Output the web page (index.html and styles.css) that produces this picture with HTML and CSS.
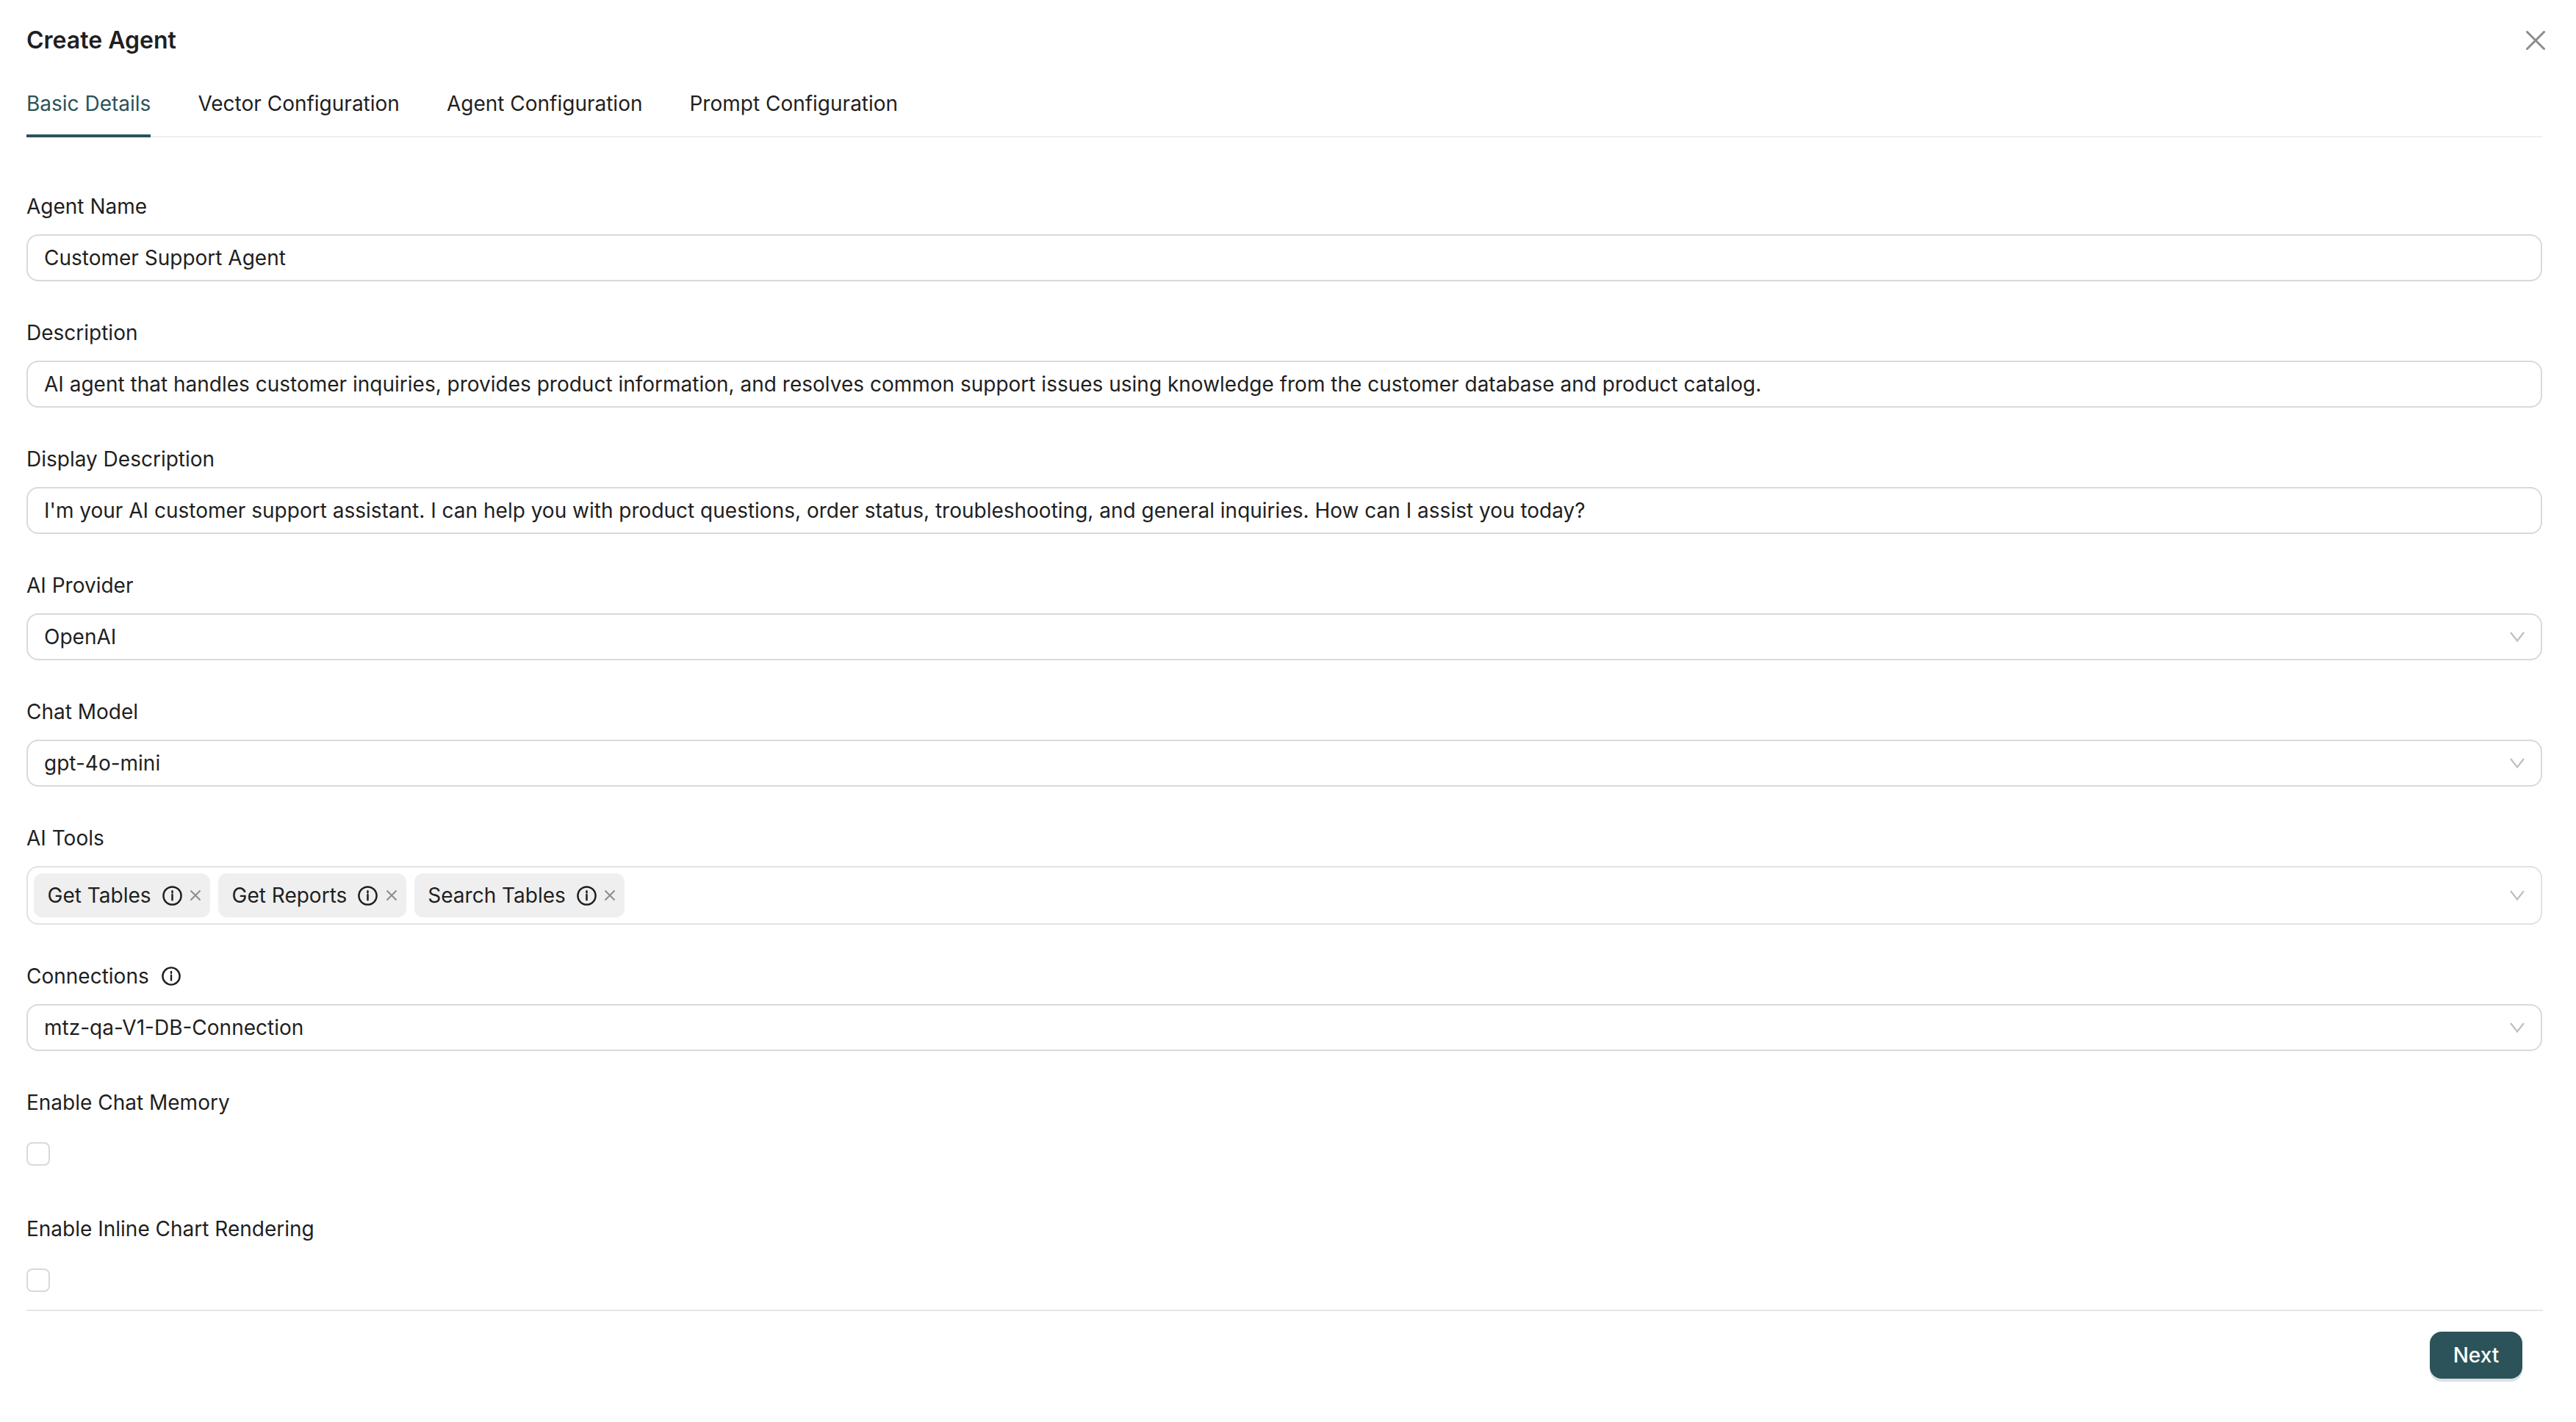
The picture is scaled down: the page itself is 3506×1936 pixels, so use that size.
FILE: index.html
```html
<!DOCTYPE html>
<html lang="en">
<head>
<meta charset="utf-8">
<title>Create Agent</title>
<link rel="stylesheet" href="styles.css">
</head>
<body>
<div class="modal">
  <header class="modal-head">
    <h1 class="title">Create Agent</h1>
    <svg class="close" viewBox="0 0 26 26"><path d="M1.5 1.5 24.5 24.5M24.5 1.5 1.5 24.5"/></svg>
  </header>
  <nav class="tabs">
    <span class="tab active">Basic Details</span>
    <span class="tab">Vector Configuration</span>
    <span class="tab">Agent Configuration</span>
    <span class="tab">Prompt Configuration</span>
  </nav>
  <form class="form">
    <div class="field">
      <div class="label">Agent Name</div>
      <div class="control">Customer Support Agent</div>
    </div>
    <div class="field">
      <div class="label">Description</div>
      <div class="control">AI agent that handles customer inquiries, provides product information, and resolves common support issues using knowledge from the customer database and product catalog.</div>
    </div>
    <div class="field">
      <div class="label">Display Description</div>
      <div class="control">I'm your AI customer support assistant. I can help you with product questions, order status, troubleshooting, and general inquiries. How can I assist you today?</div>
    </div>
    <div class="field">
      <div class="label">AI Provider</div>
      <div class="control select">OpenAI<svg class="chev" viewBox="0 0 20 14"><path d="M1 1 10 12.5 19 1"/></svg></div>
    </div>
    <div class="field">
      <div class="label">Chat Model</div>
      <div class="control select">gpt-4o-mini<svg class="chev" viewBox="0 0 20 14"><path d="M1 1 10 12.5 19 1"/></svg></div>
    </div>
    <div class="field">
      <div class="label">AI Tools</div>
      <div class="control select multi">
        <span class="tag">Get Tables<svg class="info" viewBox="0 0 28 28"><circle cx="14" cy="14" r="12.5"/><path d="M14 12.5V20M14 7.5V9.5"/></svg><svg class="tag-x" viewBox="0 0 16 16"><path d="M1.5 1.5 14.5 14.5M14.5 1.5 1.5 14.5"/></svg></span>
        <span class="tag">Get Reports<svg class="info" viewBox="0 0 28 28"><circle cx="14" cy="14" r="12.5"/><path d="M14 12.5V20M14 7.5V9.5"/></svg><svg class="tag-x" viewBox="0 0 16 16"><path d="M1.5 1.5 14.5 14.5M14.5 1.5 1.5 14.5"/></svg></span>
        <span class="tag">Search Tables<svg class="info" viewBox="0 0 28 28"><circle cx="14" cy="14" r="12.5"/><path d="M14 12.5V20M14 7.5V9.5"/></svg><svg class="tag-x" viewBox="0 0 16 16"><path d="M1.5 1.5 14.5 14.5M14.5 1.5 1.5 14.5"/></svg></span>
        <svg class="chev" viewBox="0 0 20 14"><path d="M1 1 10 12.5 19 1"/></svg>
      </div>
    </div>
    <div class="field">
      <div class="label">Connections<svg class="info label-info" viewBox="0 0 28 28"><circle cx="14" cy="14" r="12.5"/><path d="M14 12.5V20M14 7.5V9.5"/></svg></div>
      <div class="control select">mtz-qa-V1-DB-Connection<svg class="chev" viewBox="0 0 20 14"><path d="M1 1 10 12.5 19 1"/></svg></div>
    </div>
    <div class="field">
      <div class="label">Enable Chat Memory</div>
      <div class="check-row"><span class="checkbox"></span></div>
    </div>
    <div class="field">
      <div class="label">Enable Inline Chart Rendering</div>
      <div class="check-row"><span class="checkbox"></span></div>
    </div>
  </form>
  <footer class="foot">
    <button class="next" type="button">Next</button>
  </footer>
</div>
</body>
</html>
```
FILE: styles.css
```css
* { box-sizing: border-box; }
html, body { margin: 0; background: #fff; }
body {
  font-family: Inter, "Liberation Sans", sans-serif;
  font-size: 28px;
  color: #1f1f1f;
}
.modal { width: 3506px; height: 1936px; padding: 0 46px 0 36px; overflow: hidden; }
.modal-head { height: 108px; padding-top: 2px; display: flex; align-items: center; justify-content: space-between; margin-right: -4px; }
.title { margin: 0; font-size: 32px; line-height: 40px; font-weight: 600; }
.close { width: 26px; height: 26px; fill: none; stroke: #8c8c8c; stroke-width: 3; stroke-linecap: round; }
.tabs { display: flex; gap: 64px; height: 79px; border-bottom: 2px solid #efefef; }
.tab { height: 79px; line-height: 66px; }
.tab.active { color: #2b5359; border-bottom: 4px solid #2b5359; }
.form { display: flex; flex-direction: column; gap: 51px; padding-top: 75px; }
.field { display: flex; flex-direction: column; gap: 17px; }
.label { height: 40px; padding-bottom: 2px; display: flex; align-items: center; }
.control {
  height: 64px; border: 2px solid #d9d9d9; border-radius: 16px; padding: 0 22px;
  display: flex; align-items: center; line-height: 40px;
}
.select { justify-content: space-between; }
.chev { width: 20px; height: 14px; fill: none; stroke: #bfbfbf; stroke-width: 2.2; }
.multi { height: 80px; padding: 0 22px 0 8px; gap: 11px; justify-content: flex-start; border-color: #e2e2e2; }
.multi .chev { margin-left: auto; }
.tag {
  height: 60px; background: #efefef; border-radius: 12px; padding: 0 12px 0 18.5px;
  display: flex; align-items: center;
}
.info { width: 27px; height: 27px; fill: none; stroke: #1f1f1f; stroke-width: 2.6; stroke-linecap: round; margin-left: 15px; flex: none; }
.tag-x { width: 16px; height: 16px; fill: none; stroke: #8c8c8c; stroke-width: 2; margin-left: 10.5px; flex: none; }
.label-info { width: 26px; height: 26px; margin-left: 17px; }
.check-row { height: 64px; display: flex; align-items: center; }
.checkbox { width: 32px; height: 32px; border: 2px solid #d9d9d9; border-radius: 8px; background: #fff; }
.foot { margin-top: 8px; border-top: 2px solid #e6e6e6; padding: 28px 28px 0 0; display: flex; justify-content: flex-end; margin-right: -1px; }
.next {
  width: 126px; height: 64px; border: 0; border-radius: 16px; background: #2b5359; color: #fff;
  font: 500 28px Inter, "Liberation Sans", sans-serif; box-shadow: 0 4px 0 rgba(43, 83, 89, .18);
  padding: 0;
}
```
